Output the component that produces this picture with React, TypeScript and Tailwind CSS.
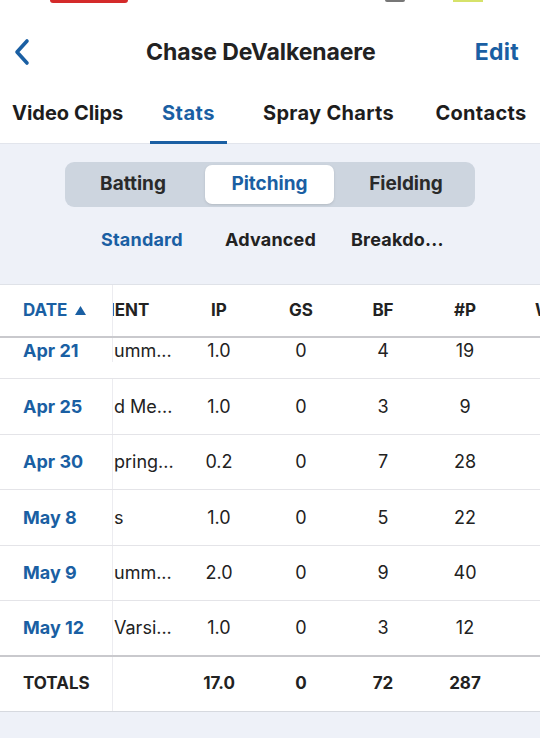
import React from "react";

const BLUE = "text-[#1a5fa3]";

interface Row {
  date: string;
  opp: string;
  ip: string;
  gs: string;
  bf: string;
  np: string;
}

const rows: Row[] = [
  { date: "Apr 25", opp: "d Me...", ip: "1.0", gs: "0", bf: "3", np: "9" },
  { date: "Apr 30", opp: "pring...", ip: "0.2", gs: "0", bf: "7", np: "28" },
  { date: "May 8", opp: "s", ip: "1.0", gs: "0", bf: "5", np: "22" },
  { date: "May 9", opp: "umm...", ip: "2.0", gs: "0", bf: "9", np: "40" },
  { date: "May 12", opp: "Varsi...", ip: "1.0", gs: "0", bf: "3", np: "12" },
];

function Cells({ r, bold }: { r: Omit<Row, "date" | "opp">; bold?: boolean }) {
  const cls = `w-[82px] shrink-0 text-center ${bold ? "font-bold" : ""}`;
  return (
    <>
      <div className={cls}>{r.ip}</div>
      <div className={cls}>{r.gs}</div>
      <div className={cls}>{r.bf}</div>
      <div className={cls}>{r.np}</div>
    </>
  );
}

function DataRow({ r, h, pad }: { r: Row; h: string; pad?: string }) {
  return (
    <div className={`flex ${h} items-center border-b border-[#e4e4e8] text-[18px] text-[#222] ${pad ?? ""}`}>
      <div className="flex h-full w-[113px] shrink-0 items-center border-r border-[#ececf0] pl-[23px]">
        <span className={`font-bold ${BLUE}`}>{r.date}</span>
      </div>
      <div className="w-[65px] shrink-0 overflow-hidden whitespace-nowrap pl-[1px]">
        {r.opp}
      </div>
      <Cells r={r} />
    </div>
  );
}

export default function App() {
  return (
    <div
      className="flex h-[738px] w-[540px] flex-col overflow-hidden bg-[#eef1f8]"
      style={{ fontFamily: "Inter, 'Liberation Sans', sans-serif" }}
    >
      <header className="bg-white">
        <div className="flex h-[4px] items-start">
          <div className="ml-[50px] h-[3px] w-[78px] rounded-b-full bg-[#d42a2a]" />
          <div className="ml-[257px] h-[2px] w-[20px] rounded-b-full bg-[#777]" />
          <div className="ml-[48px] h-[2px] w-[30px] bg-[#d6e26a]" />
        </div>
        <div className="flex h-[96px] items-center px-[12px]">
          <svg width="24" height="30" viewBox="0 0 24 30" className="ml-[-2px]">
            <path d="M17 4 L7 15 L17 26" fill="none" stroke="#1a5fa3" strokeWidth="3.6" strokeLinecap="round" strokeLinejoin="round" />
          </svg>
          <div className="flex-1 pl-[13px] text-center text-[23px] font-bold tracking-[-0.1px] text-[#222]">
            Chase DeValkenaere
          </div>
          <div className={`mr-[9px] text-[23px] font-bold tracking-[0.3px] ${BLUE}`}>Edit</div>
        </div>
        <nav className="flex h-[43px] items-start pl-[12px] text-[20px] font-bold text-[#1d1d1d]">
          <div className="mt-[-2px] w-[113px] whitespace-nowrap">Video Clips</div>
          <div className={`relative mt-[-2px] ml-[25px] w-[77px] text-center tracking-[0.5px] ${BLUE}`}>
            Stats
            <div className="absolute left-0 top-[43px] h-[3px] w-[77px] bg-[#1a5fa3]" />
          </div>
          <div className="mt-[-2px] ml-[33px] w-[137px] whitespace-nowrap text-center tracking-[0.3px]">Spray Charts</div>
          <div className="mt-[-2px] ml-[37px] w-[94px] whitespace-nowrap text-center tracking-[0.3px]">Contacts</div>
        </nav>
      </header>

      <section className="flex h-[141px] shrink-0 flex-col border-t border-[#e2e5ec] pt-[18px]">
        <div className="ml-[65px] flex h-[45px] w-[410px] items-center gap-[7px] rounded-[9px] bg-[#cdd5df] p-[3px] text-[19px] font-bold text-[#2a2a2a]">
          <div className="w-[130px] text-center">Batting</div>
          <div className={`flex h-full w-[129px] items-center justify-center rounded-[7px] bg-white shadow-sm ${BLUE}`}>
            Pitching
          </div>
          <div className="w-[130px] text-center">Fielding</div>
        </div>
        <div className="mt-[19px] ml-[101px] flex text-[18px] font-bold tracking-[0.2px] text-[#222]">
          <span className={`w-[124px] ${BLUE}`}>Standard</span>
          <span className="w-[126px]">Advanced</span>
          <span>Breakdo...</span>
        </div>
      </section>

      <div className="border-t border-[#dfe2e8] bg-white">
        <div className="flex h-[53px] items-center border-b-2 border-[#c9c9cd] text-[17px] font-bold text-[#222]">
          <div className={`flex h-full w-[113px] shrink-0 items-center gap-[7px] border-r border-[#ececf0] pl-[23px] ${BLUE}`}>
            DATE
            <svg width="13" height="11" viewBox="0 0 13 11">
              <path d="M6.5 1 L12 10 L1 10 Z" fill="#1a5fa3" />
            </svg>
          </div>
          <div className="w-[65px] shrink-0 overflow-hidden whitespace-nowrap">
            <span className="ml-[-3px]">IENT</span>
          </div>
          <Cells r={{ ip: "IP", gs: "GS", bf: "BF", np: "#P" }} />
          <div className="w-[40px] shrink-0 overflow-hidden whitespace-nowrap pl-[29px]">W</div>
        </div>
        <DataRow r={{ date: "Apr 21", opp: "umm...", ip: "1.0", gs: "0", bf: "4", np: "19" }} h="h-[41px]" pad="pb-[16px]" />
        {rows.map((r, i) => (
          <DataRow key={r.date} r={r} h={i === rows.length - 1 ? "h-[55.5px] border-b-2 border-b-[#c9c9cd]" : "h-[55.5px]"} />
        ))}
        <div className="flex h-[55px] items-center border-b border-[#d6d9df] text-[17px] text-[#222]">
          <div className="flex h-full w-[113px] shrink-0 items-center border-r border-[#ececf0] pl-[23px] font-bold">
            TOTALS
          </div>
          <div className="w-[65px] shrink-0" />
          <Cells r={{ ip: "17.0", gs: "0", bf: "72", np: "287" }} bold />
        </div>
      </div>
    </div>
  );
}
